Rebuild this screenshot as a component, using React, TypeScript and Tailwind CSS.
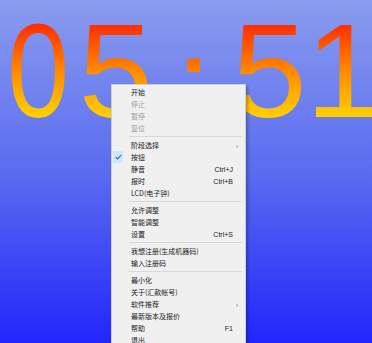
import React from "react";

type Item =
  | { sep: true }
  | { label: string; disabled?: boolean; checked?: boolean; shortcut?: string; sub?: boolean; sep?: false };

const items: Item[] = [
  { label: "开始" },
  { label: "停止", disabled: true },
  { label: "暂停", disabled: true },
  { label: "复位", disabled: true },
  { sep: true },
  { label: "阶段选择", sub: true },
  { label: "按钮", checked: true },
  { label: "静音", shortcut: "Ctrl+J" },
  { label: "报时", shortcut: "Ctrl+B" },
  { label: "LCD(电子钟)" },
  { sep: true },
  { label: "允许调整" },
  { label: "智能调整" },
  { label: "设置", shortcut: "Ctrl+S" },
  { sep: true },
  { label: "我想注册(生成机器码)" },
  { label: "输入注册码" },
  { sep: true },
  { label: "最小化" },
  { label: "关于(汇款帐号)" },
  { label: "软件推荐", sub: true },
  { label: "最新版本及报价" },
  { label: "帮助", shortcut: "F1" },
  { label: "退出" },
];

const digitCls =
  "inline-block bg-[linear-gradient(to_bottom,#ff2a00_14%,#ff8a00_50%,#ffd400_86%)] bg-clip-text text-transparent";

export default function App() {
  return (
    <div className="relative h-[343px] w-[372px] overflow-hidden bg-[linear-gradient(to_bottom,#8a9cec,#5a6cf0_50%,#2226fa)] font-['Liberation_Sans',sans-serif]">
      <div className="flex items-start pt-[4px] text-[134px] leading-none">
        <span className={`ml-[1px] scale-x-[0.83] ${digitCls}`}>0</span>
        <span className={`ml-[3px] ${digitCls}`}>5</span>
        <span className={`ml-[22px] pt-[12px] ${digitCls}`}>:</span>
        <span className={`ml-[20px] ${digitCls}`}>5</span>
        <span className={`-ml-px ${digitCls}`}>1</span>
      </div>
      <div className="absolute left-[111px] top-[84px] w-[135px] border border-[#cfcfcf] bg-[#f0f0f0] py-[1px] shadow-[2px_2px_3px_rgba(0,0,0,0.25)] font-['Noto_Sans_CJK_SC','Liberation_Sans',sans-serif] text-[7px] text-[#1a1a1a]">
        {items.map((it, i) =>
          it.sep ? (
            <div key={i} className="flex h-[5px] items-center pl-[17px] pr-[3px]">
              <div className="h-px w-full bg-[#d8d8d8]" />
            </div>
          ) : (
            <div key={i} className="relative flex h-[12px] items-center pl-[19px] pr-[6px] leading-none">
              {it.checked && (
                <div className="absolute left-[1px] top-[0px] flex h-[12px] w-[10px] items-center justify-center bg-[#cce8ff]">
                  <svg width="7" height="6" viewBox="0 0 7 6">
                    <path d="M0.8 3.2 L2.6 4.9 L6.2 1" fill="none" stroke="#1e64c8" strokeWidth="1.1" />
                  </svg>
                </div>
              )}
              <span className={`flex-1 ${it.disabled ? "text-[#9c9c9c]" : ""}`}>{it.label}</span>
              {it.shortcut && <span className="mr-[6px] font-['Liberation_Sans',sans-serif]">{it.shortcut}</span>}
              {it.sub && <span className="mr-[1px] text-[#555]">›</span>}
            </div>
          )
        )}
      </div>
    </div>
  );
}
